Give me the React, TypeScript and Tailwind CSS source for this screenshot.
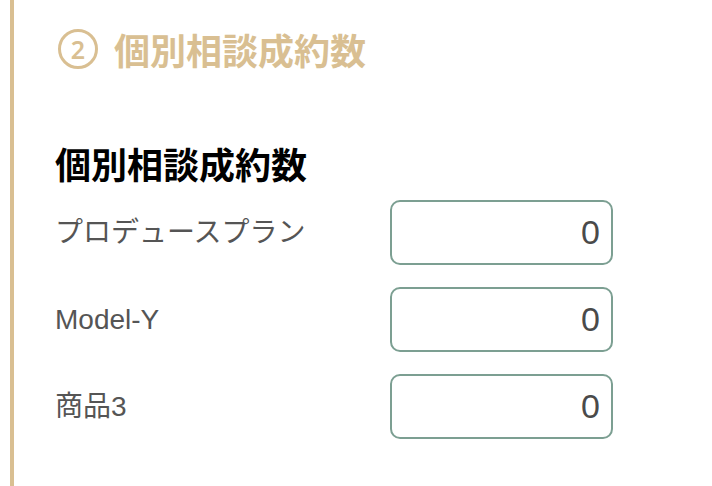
import React from "react";

const rows = [
  { label: "プロデュースプラン", value: "0" },
  { label: "Model-Y", value: "0" },
  { label: "商品3", value: "0" },
];

export default function App() {
  return (
    <div
      className="min-h-[486px] bg-white pl-[10px]"
      style={{ fontFamily: '"Liberation Sans", "Noto Sans CJK JP", sans-serif' }}
    >
      <div className="min-h-[486px] border-l-4 border-[#d9bf92] pl-[44px] pt-[22px]">
        {/* セクション見出し */}
        <div className="flex items-center h-[54px]">
          <span
            className="flex items-center justify-center w-[40px] h-[40px] rounded-full border-[3px] border-[#d9bf92] text-[#d9bf92] text-[25px] leading-none font-semibold"
            style={{ fontFamily: '"Noto Sans", sans-serif' }}
          >
            2
          </span>
          <h2
            className="ml-[16px] text-[36px] leading-[54px] font-bold text-[#d9bf92]"
            style={{ fontFamily: '"Noto Sans CJK JP", sans-serif' }}
          >
            個別相談成約数
          </h2>
        </div>

        <h3
          className="mt-[60px] -ml-[3px] text-[36px] leading-[54px] font-bold text-black"
          style={{ fontFamily: '"Noto Sans CJK JP", sans-serif' }}
        >
          個別相談成約数
        </h3>

        <div className="mt-[10px] -ml-[3px] flex flex-col gap-[22px]">
          {rows.map((r) => (
            <div key={r.label} className="flex items-center">
              <div className="w-[335px] text-[28px] text-[#555555]">{r.label}</div>
              <input
                readOnly
                value={r.value}
                className="w-[223px] h-[65px] rounded-[10px] border-2 border-[#7c9f92] pl-[13px] pr-[11px] text-right text-[34px] text-[#4a4a4a] outline-none"
              />
            </div>
          ))}
        </div>
      </div>
    </div>
  );
}
